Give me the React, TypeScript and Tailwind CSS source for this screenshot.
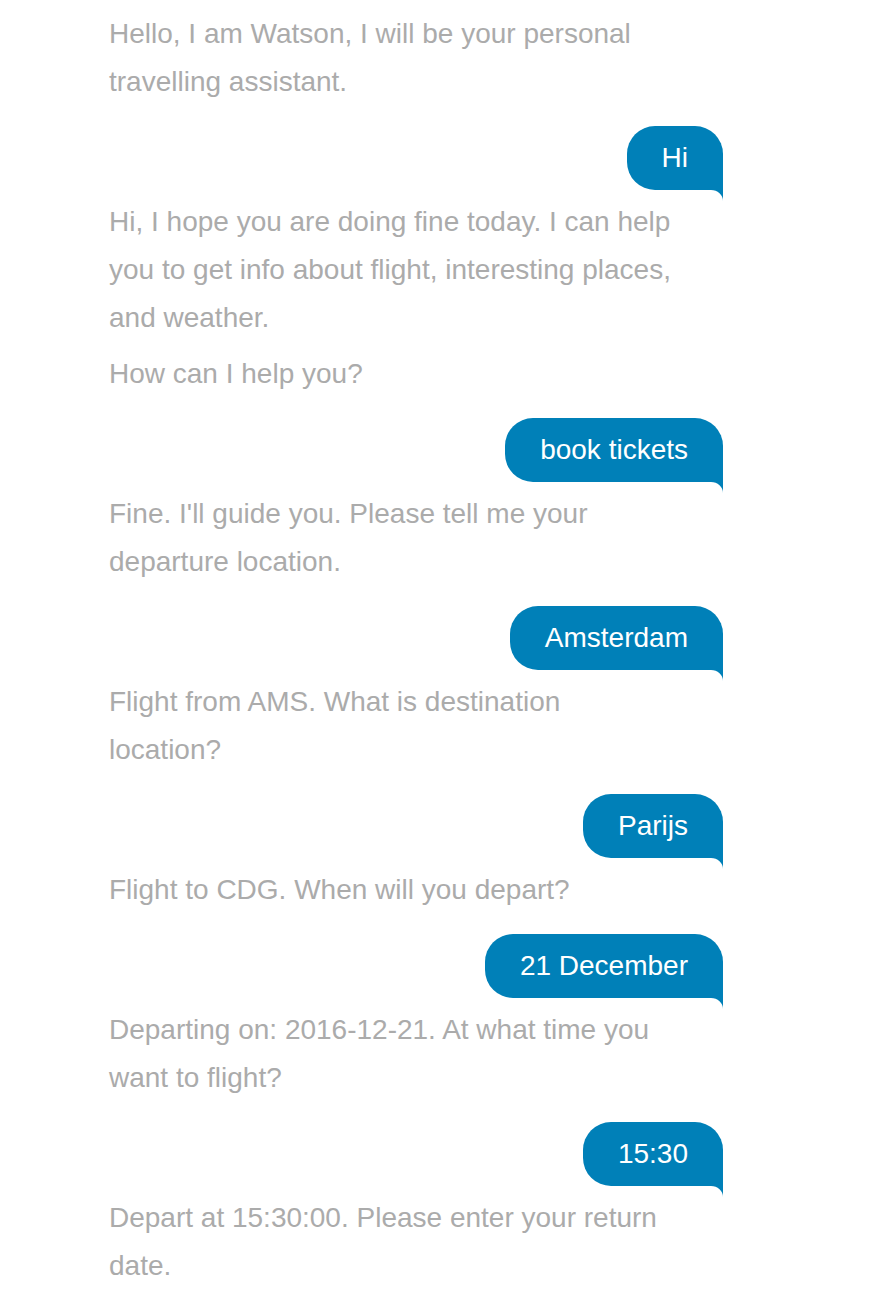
import React from "react";

type Message = { from: "watson" | "user"; text: string[] };

const messages: Message[] = [
  { from: "watson", text: ["Hello, I am Watson, I will be your personal travelling assistant."] },
  { from: "user", text: ["Hi"] },
  {
    from: "watson",
    text: [
      "Hi, I hope you are doing fine today. I can help you to get info about flight, interesting places, and weather.",
      "How can I help you?",
    ],
  },
  { from: "user", text: ["book tickets"] },
  { from: "watson", text: ["Fine. I'll guide you. Please tell me your departure location."] },
  { from: "user", text: ["Amsterdam"] },
  { from: "watson", text: ["Flight from AMS. What is destination location?"] },
  { from: "user", text: ["Parijs"] },
  { from: "watson", text: ["Flight to CDG. When will you depart?"] },
  { from: "user", text: ["21 December"] },
  { from: "watson", text: ["Departing on: 2016-12-21. At what time you want to flight?"] },
  { from: "user", text: ["15:30"] },
  { from: "watson", text: ["Depart at 15:30:00. Please enter your return date."] },
];

function UserBubble({ text }: { text: string }) {
  return (
    <div className="flex justify-end mt-5 mb-2">
      <div className="relative bg-[#0080b8] text-white rounded-[28px] rounded-br-none px-[35px] py-2 leading-[48px]">
        {text}
        {/* tail */}
        <svg
          className="absolute right-0 top-full"
          width="12"
          height="11"
          viewBox="0 0 12 11"
        >
          <path d="M0 0 H12 V11 A12 11 0 0 0 0 0 Z" fill="#0080b8" />
        </svg>
      </div>
    </div>
  );
}

function WatsonText({ text }: { text: string[] }) {
  return (
    <div className="max-w-[568px] text-[#ababab] leading-[48px] space-y-[8px]">
      {text.map((t, i) => (
        <p key={i}>{t}</p>
      ))}
    </div>
  );
}

export default function App() {
  return (
    <div
      className="min-h-screen bg-white text-[28px]"
      style={{ fontFamily: '"Liberation Sans", Arial, sans-serif' }}
    >
      <div className="ml-[109px] w-[614px] pt-[10px]">
        {messages.map((m, i) =>
          m.from === "user" ? (
            <UserBubble key={i} text={m.text[0]} />
          ) : (
            <WatsonText key={i} text={m.text} />
          )
        )}
      </div>
    </div>
  );
}
